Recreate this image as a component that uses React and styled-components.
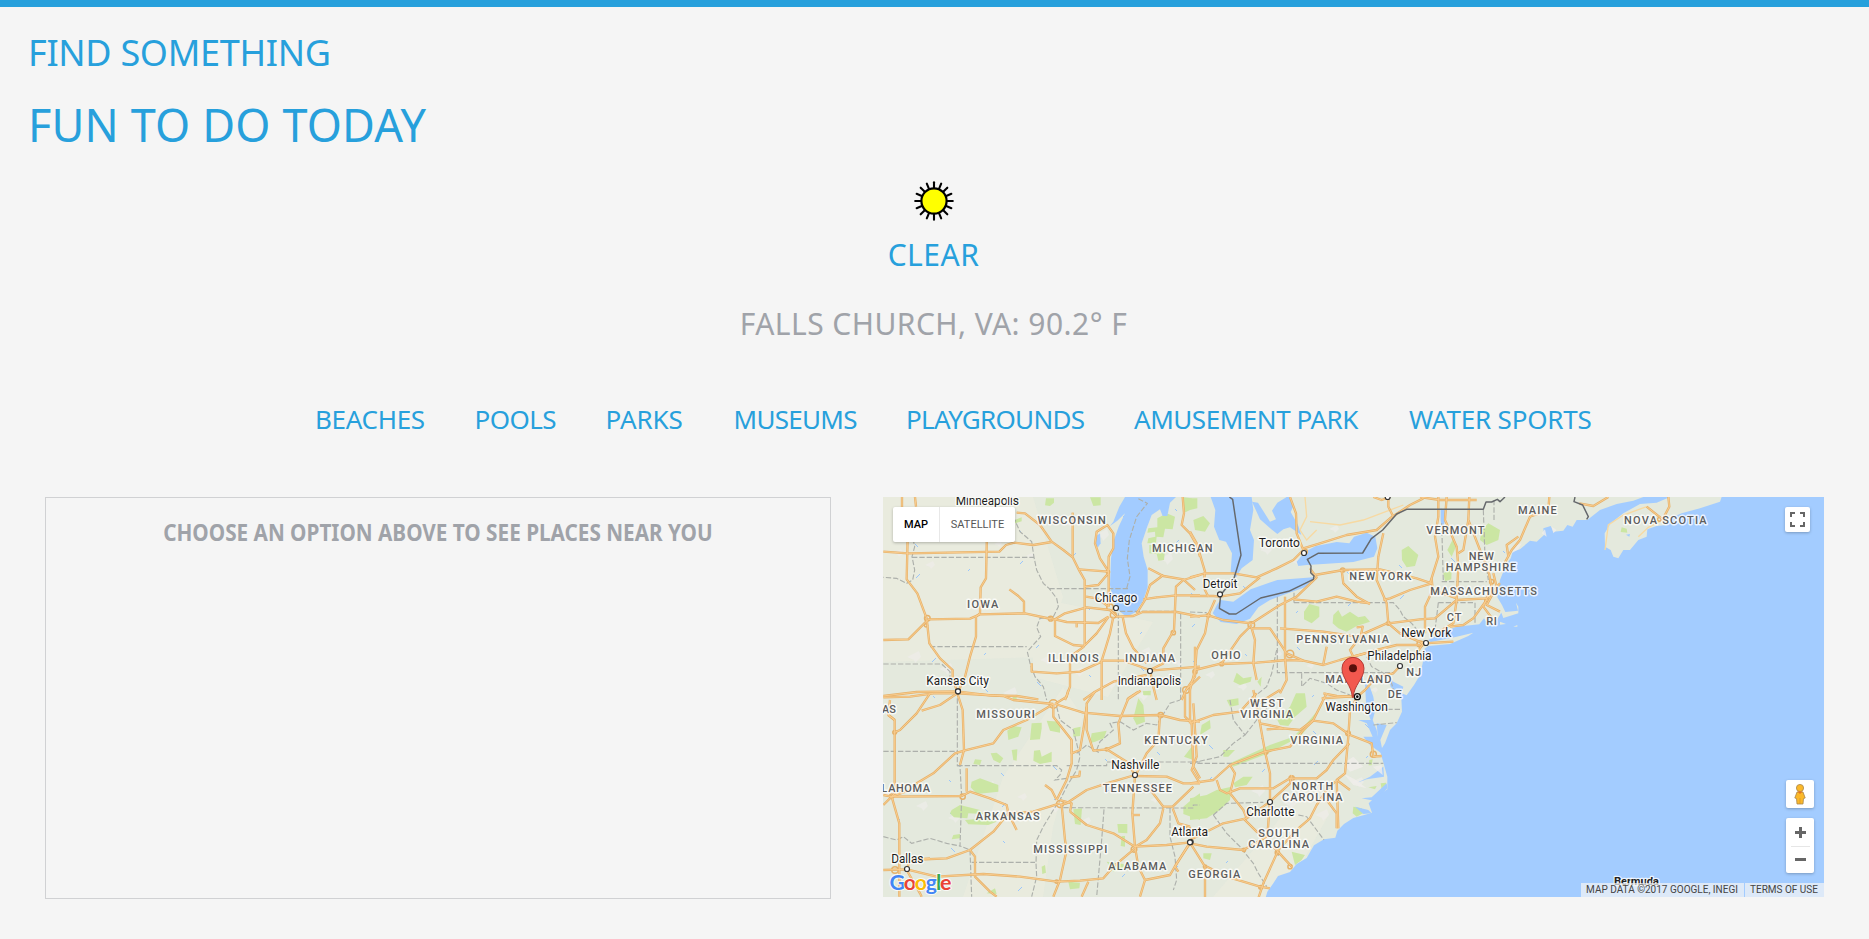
import React from "react";
import styled, { createGlobalStyle } from "styled-components";

const BLUE = "#27a0dc";
const GREY = "#a0a3a9";

const GlobalStyle = createGlobalStyle`
  * { box-sizing: border-box; }
  body { margin: 0; background: #f5f5f5; overflow: hidden; }
`;

const Page = styled.div`
  height: 939px;
  border-top: 7px solid ${BLUE};
  font-family: "Noto Sans", "Open Sans", sans-serif;
  color: ${GREY};
  text-transform: uppercase;
  white-space: nowrap;
`;

const Header = styled.header`
  padding: 21px 0 0 28px;
  color: ${BLUE};
`;

const Heading = styled.h1`
  margin: 0;
  font-weight: 400;
  font-size: ${(p) => p.$size}px;
  line-height: ${(p) => p.$line}px;
  letter-spacing: ${(p) => p.$spacing}px;
  padding-top: ${(p) => p.$top || 0}px;
`;

const Weather = styled.section`
  display: flex;
  flex-direction: column;
  align-items: center;
  padding: 26px 2px 0 0;
  font-size: 30px;
  line-height: 40px;
`;

const SunIcon = styled.svg`
  width: 40px;
  height: 40px;
`;

const Condition = styled.div`
  margin-top: 14px;
  letter-spacing: 0.5px;
  color: ${BLUE};
`;

const Place = styled.div`
  margin-top: 29px;
  letter-spacing: 0.45px;
`;

const Nav = styled.nav`
  display: flex;
  padding: 57px 0 0 315px;
  font-size: 26px;
  line-height: 36px;
  color: ${BLUE};
`;

const NavItem = styled.a`
  flex: none;
  width: ${(p) => p.$width}px;
  letter-spacing: ${(p) => p.$spacing}px;
`;

const Panels = styled.main`
  display: flex;
  align-items: flex-start;
  gap: 52px;
  padding: 60px 0 0 45px;
`;

const Places = styled.section`
  width: 786px;
  height: 402px;
  border: 1px solid #d0d1d3;
  padding-top: 17px;
  display: flex;
  justify-content: center;
`;

const Prompt = styled.div`
  height: 34px;
  font-size: 23px;
  font-weight: 700;
  line-height: 34px;
  transform: scaleX(0.901);
`;

const MapFrame = styled.section`
  position: relative;
  width: 941px;
  height: 400px;
  overflow: hidden;
  font-family: Roboto, sans-serif;
`;

const MapCanvas = styled.svg`
  display: block;
  width: 941px;
  height: 400px;
  text-transform: none;
`;

const Control = styled.div`
  position: absolute;
  top: ${(p) => p.$top}px;
  left: ${(p) => p.$left}px;
  width: ${(p) => p.$w}px;
  height: ${(p) => p.$h}px;
  display: flex;
  flex-direction: ${(p) => (p.$column ? "column" : "row")};
  align-items: center;
  justify-content: center;
  background: #fff;
  border-radius: 2px;
  box-shadow: 0 1px 3px rgba(0, 0, 0, 0.25);
`;

const MapType = styled.div`
  width: ${(p) => p.$w}px;
  height: 35px;
  line-height: 35px;
  text-align: center;
  font-size: 11px;
  font-weight: ${(p) => (p.$active ? 500 : 400)};
  color: ${(p) => (p.$active ? "#000" : "#565656")};
  border-left: ${(p) => (p.$active ? "0" : "1px solid #e8e8e8")};
`;

const ZoomButton = styled.div`
  width: 19px;
  height: 27px;
  display: flex;
  align-items: center;
  justify-content: center;
  & + & { border-top: 1px solid #e6e6e6; }
`;

const Attribution = styled.div`
  position: absolute;
  right: 0;
  bottom: 0;
  display: flex;
  gap: 1px;
  height: 14px;
  line-height: 14px;
  font-size: 10px;
  color: #444;
`;

const Credit = styled.span`
  width: ${(p) => p.$w}px;
  padding-right: 1px;
  text-align: center;
  background: rgba(245, 245, 245, 0.7);
`;

/* The map is drawn in sheets; every sheet has its own origin, at three units a pixel. */
const SHEETS = [
  {
    at: [-3, -7],
    water: [
      "M700 95L718 50L735 21H888L870 38L862 78L848 78L840 58L815 75L800 115L785 160L791 200L803 240V292L790 330L768 366L740 380L716 362L700 335L690 285L693 205L702 150L716 110L735 70L712 92L690 108Z",
      "M646 140L660 130L662 160L654 172L646 165Z",
    ],
    parks: ["M498 25H522V38L510 48L495 46Z", "M630 22H662V46L640 48Z", "M832 85L860 70L885 80L878 118L855 116L850 142L830 140L828 158L802 160L805 145L826 140L825 125L802 128L805 115L832 112Z", "M808 165H830L828 178L855 180L852 210L835 212L830 192L808 190Z", "M910 22L935 25L930 60L910 70Z", "M405 90L425 82V94L405 100Z", "M788 604L812 602V616H792Z", "M398 618L410 620V630H398Z"],
    borders: ["M98 80L96 130L104 170L96 200L104 240L98 270L80 280L50 265L10 262", "M96 202H462", "M400 80L420 125L455 155L462 202L470 240L490 280L508 296L530 325L535 350L520 380L480 385L470 412L482 440L455 470L442 485L450 520L465 560L490 590L500 630", "M508 296H750", "M150 470H440", "M10 522H185L210 545V570", "M715 370V630", "M720 364H890", "M902 372V630", "M740 295L750 260L742 205L748 150L770 80L802 40L770 24"],
    roads: ["M66 21V60L84 100L80 268L112 310L140 385L148 460L180 505L218 540V570L232 604", "M105 21L108 50", "M10 185L85 190L200 188L358 185L378 165L402 158L460 165L515 156", "M410 68L435 70L480 105L515 155L550 180L578 202L598 242L614 270V468", "M578 68V200", "M322 80L318 265L302 292L300 370L288 380V440L270 500L255 560L235 604", "M388 298L415 318L432 335V370", "M10 450L85 448L145 388L270 386L300 373L435 370L500 384L525 388L555 370L620 352L690 360L710 380L760 378L788 366L890 366L960 380", "M525 388L560 396L655 399L685 380", "M597 238L685 245", "M614 290L655 285L685 250L686 200L700 175V130L682 105L650 125L645 160L660 205L686 245L686 350", "M618 320L650 325L686 350", "M525 388V438L580 465L612 468L650 430L686 380", "M700 380L690 430L675 480L665 512V630", "M612 470L570 500V590L555 630", "M665 512H730L810 540L850 520V475L882 420L888 290L910 270L960 255", "M728 380L738 430L760 475L800 520", "M805 235L850 258L910 268L945 300", "M850 255L810 285L795 330L770 370", "M790 328L830 322L890 316H960", "M455 520V545L530 550L600 545L665 515", "M10 618L110 606L230 604L330 616L410 618L475 628", "M810 540L820 590L830 630", "M810 542L960 530", "M800 555L700 575L645 605L610 630", "M945 470V560L918 600L905 630", "M918 600L960 560", "M908 21L912 70L905 105L930 130L950 165L960 200", "M590 400V412", "M740 630L770 610L782 602"],
    hubs: [[142, 385, 12], [138, 406, 7], [512, 386, 10], [690, 352, 14], [700, 375, 13], [880, 428, 9], [918, 600, 14], [684, 246, 7]],
    cities: [[234, 604], [708, 354], [810, 543]],
    cityText: [["Minneapolis", 322, 45, 190], ["Chicago", 708, 335, 128], ["Kansas City", 233, 584, 188], ["Indianapolis", 808, 584, 190]],
    stateText: [["WISCONSIN", 575, 101, 205], ["IOWA", 308, 353, 94], ["ILLINOIS", 580, 515, 152], ["INDIANA", 810, 515, 150]],
  },
  {
    at: [307, -7],
    water: [
      "M62 21H185L190 60L180 120L192 150L188 210L155 235L138 262L122 245L126 190L108 155L88 150L72 110L76 60Z",
      "M186 35L204 38L240 95L258 88L246 62L262 38L290 21H298L312 45L302 66L324 105L334 135L300 112L280 118L262 132L244 118L210 88Z",
      "M320 215L345 185L378 168L440 156L478 160L492 140L530 128L556 140L562 175L552 200L490 216L400 222L350 225L325 228Z",
      "M92 330L130 335L182 298L262 270L370 262L350 290L298 308L240 330L205 352L180 386L140 402L92 396L68 370L82 342Z",
      "M752 55L766 62L768 85L756 120L752 90Z",
      "M525 580L540 592L550 620L556 660L548 690L560 720L574 790L540 765L520 740L548 740L530 700L505 690L542 690L530 655L500 640L528 640Z",
      "M498 880L540 860L580 830L582 860L530 868Z", "M515 925L545 922L590 880L592 895L560 932L540 930Z", "M495 950L535 960L545 970L520 972Z",
      "M1360 21L1330 32L1280 42L1230 60L1192 90L1160 90L1148 110L1132 105L1120 122L1090 125L1082 108L1060 115L1062 135L1040 155L1020 152L990 178L968 185L962 205L948 225L938 250L930 270L924 300L922 322L936 345L946 366L984 362L978 338L985 350V370L940 384L934 368L915 398L895 405L882 385L868 403L800 410L760 425L715 450L722 456L800 440L850 428L835 438L780 462L715 468L704 476L698 520L690 555L672 585L650 616L635 610L640 590L610 575L594 552L602 590L634 625L636 665L620 700L600 720L585 760L576 774L571 750L590 705L560 700L565 760L575 800L584 832L592 860V898L552 925L536 940L546 968L520 976L490 984L462 1002L442 1022L436 1043L402 1048L372 1066L350 1104L320 1122L300 1146L264 1158L250 1180L232 1205L222 1240H1940V21Z",
    ],
    land: ["M1440 21L1400 38L1350 42L1300 70L1262 100L1244 130L1245 170L1262 180L1270 200L1285 205L1300 180L1320 180L1345 150L1370 140L1372 118L1400 108L1430 105L1440 85L1475 70L1530 55L1590 35L1595 21Z"],
    parks: ["M342 365L358 342L388 350V380L365 400L342 388Z", "M430 375L445 360L456 380L480 365L505 382L525 378L540 395L500 408L470 425L445 415L428 400Z", "M635 180L655 168L668 180L685 195L675 228L650 232L636 210Z", "M875 120L895 100L930 120L925 150L890 165L870 150Z", "M772 180L790 145L800 165L785 200Z", "M760 250L785 238L784 268L765 274Z", "M10 90L40 78L60 100L45 125L15 120Z", "M0 25H22V55L0 60Z", "M130 575L140 548L160 565L185 560L182 575L150 585Z", "M202 575L215 560L212 590Z", "M262 690L300 650L318 610L345 610L350 650L315 680L295 708L270 705Z", "M350 700L380 665L400 640L372 690L330 740L230 792L130 830L120 820L240 765L310 740Z", "M110 630L145 625L146 645L120 650Z", "M35 705L60 690L62 715L30 735Z", "M490 950L515 955L522 968L500 980L488 970Z", "M538 810L548 808L545 826H536Z", "M572 880L588 878V898L575 900Z", "M535 892L560 888L555 898Z", "M305 1085L345 1095L335 1110L315 1125Z", "M0 925L50 915L80 900L125 890L120 930L90 960L50 985L0 990Z", "M130 880L160 860L188 860L170 885L135 892Z", "M100 780L135 780L115 800H100Z", "M40 1090L65 1090L60 1110L40 1105Z", "M1295 112L1310 116L1312 128L1292 126Z"],
    borders: ["M262 320V548H610", "M312 338H610L630 360L640 380L665 400L690 430", "M312 308V338", "M755 100L760 275", "M755 275H890", "M745 338H855V400", "M745 338L735 420L720 440", "M880 60L885 200L895 270", "M912 30V90", "M260 480L245 550L230 590L205 610L180 625", "M335 550V590L360 565L410 580L440 600L480 615", "M0 366L50 368", "M530 500L545 530L600 560L610 600", "M570 658H632", "M550 705L620 698", "M0 820L120 820H580", "M120 630L130 690L165 735L130 760L90 800L0 820", "M165 735L200 690L235 650", "M70 975L110 940L220 937", "M325 975L350 980L402 1050", "M70 975L110 1030L150 1070L190 1120L205 1150L230 1190"],
    frontier: ["M118 21L128 28L153 195L132 265L92 315L88 355L118 372H138L212 324L296 304L370 268L372 258L362 248L363 228L352 208L384 190L518 189L544 146L578 120L620 72L650 58H880L888 36H905L922 28L930 35L945 21", "M1155 21L1152 35L1178 45L1195 80L1190 88"],
    roads: ["M300 21L318 70L320 130L340 180L310 210L260 235L200 262L130 250H45L0 262", "M340 175L390 160L470 135L560 120L600 85L660 45L700 25", "M0 125L20 160L45 245L40 290L55 320", "M0 318L70 318L90 320L150 310L210 262", "M55 375L75 330", "M0 380L55 376L100 390L185 400L270 345L320 320L380 262L360 235", "M55 376L45 430L20 480L15 540L0 600", "M185 405L150 440L95 520L15 540", "M95 522L200 518L290 510L340 512L400 525L450 510L525 490L560 480L620 465L690 465L700 455", "M185 415L240 415L290 490L340 512", "M285 320V500L290 570L270 610", "M185 415L195 450L190 520L200 570", "M270 415L400 425L500 440L590 400", "M410 470L400 522", "M500 412L518 410L512 440L480 480L490 500L525 490", "M375 255L460 240L570 238L680 265L725 280", "M455 240L460 280L500 320L540 342", "M580 130L565 200L560 270L590 340L595 400L630 430L700 460", "M725 280L660 300L600 325L580 330", "M725 265L728 300L705 350V430", "M310 328L380 335L440 320L500 335L540 340", "M595 400L690 388L735 385L800 330L890 325L930 280", "M728 300L800 325", "M745 21V80L735 140L745 200L720 280", "M770 21L765 90L800 170L805 230L800 330L790 400L730 435", "M838 21L835 90L870 180L895 240L905 290L880 350L910 390", "M835 90L820 180L805 190", "M890 330L850 385L820 405L780 410", "M910 250L920 290L890 345L930 365", "M690 21L750 30H860", "M600 21L575 30L550 21", "M610 80L595 50V21", "M630 528L610 550L560 560L525 600L502 620", "M502 620L480 660L475 740L465 850L440 870L445 1015", "M645 510L680 490L700 460L790 455", "M395 625L500 618", "M0 700L70 675L150 665L200 610", "M400 610L440 618L500 620", "M410 610L370 690L330 720L280 715L230 718", "M190 600L210 700L225 785L240 850V930L232 1040", "M225 785L300 770L340 720L370 692L430 700L480 735", "M225 785L120 825L70 870L0 880", "M480 735L545 760L550 800L575 798", "M478 760L430 810L410 840L380 865H300L250 895L150 895L110 910L90 900L80 870", "M120 825L135 850L120 910L160 960L170 985L240 935", "M170 985L100 1000L0 1050", "M160 985L200 1025L230 1040", "M240 935L300 880L305 855", "M410 930L440 970V1015", "M440 870L480 900", "M410 900L380 945L360 985L320 1020L265 1080L220 1180L205 1225", "M0 1060L50 1070L160 1080L230 1040", "M0 1058L45 1130V1225", "M250 1070L305 1130", "M50 1130L110 1160L210 1190L240 1195", "M410 900L435 875", "M0 600V700", "M10 640L20 800L5 840L30 880", "M210 700L260 710L280 715", "M270 600L230 625L185 640", "M938 230L965 180L990 150L1020 80L1075 60L1078 21", "M955 200L950 165L985 140", "M1168 40L1210 48L1255 21", "M1370 50L1418 88L1438 50L1435 21"],
    minor: ["M345 21L350 80L330 120L350 150L380 120", "M360 95L450 105L520 90L640 45", "M1370 50L1300 75L1255 105L1245 180", "M1345 140L1375 112L1418 90"],
    hubs: [[184, 405, 14], [300, 492, 16], [458, 240, 9], [55, 376, 8], [95, 522, 8], [15, 545, 9], [595, 400, 8], [690, 462, 13], [550, 793, 13], [474, 730, 10], [228, 787, 8], [305, 865, 11], [345, 185, 10], [905, 275, 9], [890, 330, 8], [262, 1088, 9], [162, 1080, 7], [300, 1130, 9], [45, 1130, 7], [212, 1192, 8], [1408, 88, 8]],
    cities: [[342, 189], [90, 313], [708, 459], [630, 528], [240, 936], [593, 21], [2, 1056]],
    cityText: [["Toronto", 268, 170, 123], ["Detroit", 90, 294, 104], ["New York", 709, 440, 150], ["Philadelphia", 628, 509, 193], ["Washington", 500, 663, 188], ["Charlotte", 241, 978, 145]],
    stateText: [["MICHIGAN", -23, 185, 182], ["VERMONT", 796, 131, 174], ["NEW YORK", 571, 269, 186], ["NEW", 874, 209, 76], ["HAMPSHIRE", 873, 242, 212], ["MASSACHUSETTS", 881, 314, 320], ["CT", 792, 392, 44], ["RI", 905, 404, 32], ["PENNSYLVANIA", 458, 458, 278], ["OHIO", 108, 508, 88], ["MARYLAND", 505, 579, 198], ["NJ", 671, 558, 44], ["DE", 614, 623, 42], ["WEST", 230, 650, 100], ["VIRGINIA", 230, 683, 158], ["VIRGINIA", 380, 761, 158], ["NORTH", 368, 899, 124], ["CAROLINA", 367, 932, 182], ["SOUTH", 266, 1040, 122], ["CAROLINA", 266, 1073, 182], ["MAINE", 1042, 71, 116], ["NOVA SCOTIA", 1426, 101, 248]],
  },
  {
    at: [-3, 193],
    parks: ["M382 122L400 108L425 112L415 140L385 150Z", "M455 100L485 98V115L480 148L450 150Z", "M500 92L540 95V128L510 122Z", "M395 180L412 178L410 212L400 210Z", "M462 182L480 180L485 200L515 185V215L480 222L460 212Z", "M332 190L350 188L370 205L360 220L340 210Z", "M285 208L305 210L300 225L280 222Z", "M580 115L602 110L600 138L580 140Z", "M635 130L680 122L672 145L645 155L630 160Z", "M275 275L300 265L355 285L355 305L290 312L272 292Z", "M215 360L240 345L300 360L310 372L265 370L262 385L222 382L210 370Z", "M255 390L320 385L350 395L325 405L265 403Z", "M220 435L240 432V445L215 448Z", "M580 358L606 355L602 405L585 402Z", "M712 402H742V430L715 428Z", "M725 438H735V470L722 468Z", "M680 515L730 522L740 535L700 545Z", "M565 575L600 578L598 595L570 598Z", "M912 200L935 170L940 210Z", "M910 350L945 320L960 310V390L910 372Z", "M790 4L812 3L808 15H790Z", "M760 85L775 25L790 45L795 95L770 105Z", "M485 530L495 525L498 548L487 552Z", "M320 610L345 595L350 612Z"],
    borders: ["M232 25V227H240V230L245 320L240 468L270 480L275 620", "M10 184H232", "M232 227H530L545 240L540 255L525 270L560 265", "M10 440L50 450L70 440L95 460L150 445L200 460L240 468", "M275 517H465", "M530 50L540 90L580 120L590 160L600 200L590 240L560 290L540 330L520 360L490 410L470 450L468 520L470 560L455 620", "M590 190L620 165L660 190", "M650 180L660 155L700 120L690 100L720 95L760 120L800 100L830 105L870 40L900 30", "M560 227H680V216H960", "M550 353L870 354H940V345H960", "M672 358L665 450L650 620", "M870 354L870 440L885 500L890 570L880 600"],
    roads: ["M10 22L90 20L160 10L232 10L370 18L400 30L520 42", "M232 10L180 45L125 62", "M150 10L110 70L60 120L44 127", "M25 75L44 90V310L35 320L58 400V620", "M30 30L25 75L44 90", "M232 10L248 60L252 180L240 225", "M520 42L440 90L370 120L340 160L252 182L225 190L160 250L110 280L90 300L35 320L10 345", "M10 315L35 320L245 318L270 305L330 325L380 345L385 370L410 420", "M260 235V305", "M540 340L460 365L385 370L340 425L270 480L200 505L90 510", "M520 42V80L575 150V220L560 270L530 330", "M525 42L610 68L720 78L840 75L900 90L960 95", "M525 42L560 20L565 0", "M645 5L620 40V120L640 182L680 178", "M680 178L740 215L765 255", "M680 178L720 160L715 100L745 25L775 5", "M840 75L835 150L800 190L770 250", "M915 10V80L935 100L940 230L960 265", "M765 255L680 280L620 300L560 340L540 345", "M765 258L757 370L765 470", "M765 258L860 260L910 280L960 280", "M800 285L850 350H878L940 290", "M850 355L840 400L800 450L765 470", "M878 355L895 400L930 410", "M765 470L860 465L930 457", "M765 470L700 430L620 405L570 365", "M757 375L780 375", "M545 345L555 450L560 480L540 570L520 620", "M495 285L515 300L530 330", "M600 242L598 258L570 262", "M540 330L575 340L570 365", "M10 540L80 538L170 560L310 552L420 560L530 575L600 572L670 565L700 530L765 475", "M80 538L90 510L150 505", "M80 540L120 610L125 620", "M270 480L285 500V560L330 605L350 620", "M765 470L775 530L795 570L780 620", "M795 570L870 555L890 520L930 460", "M605 620L625 575", "M930 457L885 530L895 545", "M575 150V190L600 180L610 120L620 50"],
    hubs: [[520, 42, 18], [540, 342, 15], [248, 320, 11], [35, 318, 9], [842, 75, 11], [762, 478, 12], [45, 540, 14], [44, 127, 8], [680, 178, 7], [925, 415, 8], [530, 575, 7]],
    cities: [[765, 255], [930, 457], [81, 537], [234, 4]],
    cityText: [["Nashville", 766, 237, 144], ["Atlanta", 929, 438, 110], ["Dallas", 82, 519, 97]],
    stateText: [["KANSAS", -15, 68, 125], ["MISSOURI", 377, 83, 176], ["KENTUCKY", 888, 161, 190], ["OKLAHOMA", 54, 305, 192], ["TENNESSEE", 772, 305, 208], ["ARKANSAS", 383, 389, 192], ["MISSISSIPPI", 571, 488, 222], ["ALABAMA", 772, 539, 174], ["GEORGIA", 1003, 563, 156]],
  },
];

const Layer = ({ name, render }) =>
  SHEETS.map((s, i) => (
    <g key={i} transform={`translate(${s.at[0]} ${s.at[1]}) scale(0.33333)`}>
      {(s[name] || []).map(render)}
    </g>
  ));

/* Small lakes and pale hills scattered over the land. */
const LAKES = Array.from({ length: 95 }, (_, i) => [(i * 173 + 31) % 640, (i * 97 + 13) % 395, (i % 3) + 2]);
const HILLS = Array.from({ length: 48 }, (_, i) => [(i * 211 + 47) % 500, (i * 131 + 23) % 390, (i % 4) + 3]);

function Terrain() {
  return (
    <MapCanvas viewBox="0 0 941 400">
      <rect width="941" height="400" fill="#e4e9dd" />
      <path d="M0 0H150L180 100L160 160L0 165Z M150 100L270 125L225 200L150 180Z M80 400L120 280L180 190L200 220L170 330L160 400Z M330 400L390 330L430 280L450 310L400 400Z" fill="#eaebdf" opacity=".8" />
      {HILLS.map(([x, y, r], i) => (
        <path key={i} d={`M${x} ${y}l${r * 2} ${-r} l2 ${r} l${-r} ${r} l-1 ${-r / 2}z`} fill="#eeece9" opacity=".7" />
      ))}
      {LAKES.map(([x, y, r], i) => (
        <path key={i} d={`M${x} ${y}l${r} ${i % 2 ? r : -r}`} stroke="#91c2ff" strokeWidth=".9" />
      ))}
      <Layer name="parks" render={(d, i) => <path key={i} d={d} fill="#cbe6a3" />} />
      <Layer name="water" render={(d, i) => <path key={i} d={d} fill="#a3ccff" />} />
      <Layer name="land" render={(d, i) => <path key={i} d={d} fill="#e4e9dd" />} />
      <g transform="translate(307 -7) scale(.33333)">
        <path d="M1295 112L1310 116L1312 128L1292 126Z" fill="#cbe6a3" />
        <path d="M1308 134L1320 132L1318 140Z" fill="#a3ccff" />
        <path d="M970 410L982 405V410Z M930 395L948 402L930 404Z" fill="#e4e9dd" />
        <path d="M965 190L980 165L995 160L985 178Z M1055 130L1065 118L1070 140Z M1085 110L1100 120L1090 130Z M460 850L498 870L530 895L490 885Z M548 830L575 825L578 855Z M490 800L460 820L480 845L520 830Z" fill="#f0eeeb" opacity=".8" />
      </g>
      <Layer name="borders" render={(d, i) => <path key={i} d={d} fill="none" stroke="#adb0ab" strokeWidth="3.4" strokeDasharray="16 6" />} />
      <Layer name="minor" render={(d, i) => <path key={i} d={d} fill="none" stroke="#f7d9a2" strokeWidth="4" />} />
      <Layer name="roads" render={(d, i) => <path key={i} d={d} fill="none" stroke="#e6b26b" strokeWidth="7" strokeLinejoin="round" />} />
      <Layer name="hubs" render={([x, y, r], i) => <circle key={i} cx={x} cy={y} r={r * 0.7} fill="none" stroke="#e6b26b" strokeWidth="4.5" />} />
      <Layer name="roads" render={(d, i) => <path key={i} d={d} fill="none" stroke="#fbd093" strokeWidth="2.6" strokeLinejoin="round" />} />
      <Layer name="frontier" render={(d, i) => <path key={i} d={d} fill="none" stroke="#65686c" strokeWidth="4.4" strokeLinejoin="round" />} />
      <Layer name="cities" render={([x, y], i) => <circle key={i} cx={x} cy={y} r="7.5" fill="#fff" stroke="#333" strokeWidth="3.6" />} />
      <g fontFamily="Roboto, sans-serif" textAnchor="middle" paintOrder="stroke" stroke="#fff" strokeOpacity=".75" strokeLinejoin="round">
        <Layer name="stateText" render={([t, x, y, w], i) => (
          <text key={i} x={x} y={y} textLength={w} fontSize="33" fontWeight="500" fill="#5c5c5c" strokeWidth="9">{t}</text>
        )} />
        <Layer name="cityText" render={([t, x, y, w], i) => (
          <text key={i} x={x} y={y} textLength={w} fontSize="36" fill="#1c1c1c" strokeWidth="9">{t}</text>
        )} />
        <text x="753.5" y="388" textLength="45" fontSize="11.5" fontWeight="700" fill="#222" strokeWidth="2.5">Bermuda</text>
      </g>
      <g transform="translate(307 -7) scale(.33333)">
        <circle cx="502" cy="620" r="9" fill="#fff" stroke="#111" strokeWidth="4" />
        <circle cx="502" cy="620" r="4" fill="#111" />
        <path d="M487 622C485 584 456 568 456 535A33 33 0 0 1 522 535C522 568 491 584 490 622Z" fill="#f2584e" stroke="#b43a35" strokeWidth="3" />
        <circle cx="489" cy="535" r="12" fill="#590f0b" />
      </g>
      <text x="6.5" y="393" textLength="62" fontFamily="Lato, sans-serif" fontSize="21.5" fontWeight="700" paintOrder="stroke" stroke="#fff" strokeWidth="2" strokeOpacity=".8">
        <tspan fill="#4285f4">G</tspan><tspan fill="#ea4335">o</tspan><tspan fill="#fbbc05">o</tspan><tspan fill="#4285f4">g</tspan><tspan fill="#34a853">l</tspan><tspan fill="#ea4335">e</tspan>
      </text>
    </MapCanvas>
  );
}

function Sun() {
  return (
    <SunIcon viewBox="-20 -20 40 40">
      {Array.from({ length: 16 }, (_, i) => (
        <path key={i} d="M0 -12V-18.8" stroke="#000" strokeWidth="2.1" strokeLinecap="round" transform={`rotate(${i * 22.5})`} />
      ))}
      <circle r="12.6" fill="#ff0" stroke="#000" strokeWidth="2.2" />
    </SunIcon>
  );
}

const CATEGORIES = [
  ["Beaches", 159.5, -0.3],
  ["Pools", 131, -0.55],
  ["Parks", 128, -0.05],
  ["Museums", 172.5, -0.7],
  ["Playgrounds", 228, -0.7],
  ["Amusement Park", 275, -0.45],
  ["Water Sports", 190, -0.2],
];

export default function App() {
  return (
    <Page>
      <GlobalStyle />
      <Header>
        <Heading $size={36} $line={50} $spacing={-0.3}>Find something</Heading>
        <Heading as="h2" $size={45} $line={60} $spacing={0.17} $top={17}>Fun to do today</Heading>
      </Header>
      <Weather>
        <Sun />
        <Condition>Clear</Condition>
        <Place>Falls Church, VA: 90.2° F</Place>
      </Weather>
      <Nav>
        {CATEGORIES.map(([name, width, spacing]) => (
          <NavItem key={name} $width={width} $spacing={spacing}>{name}</NavItem>
        ))}
      </Nav>
      <Panels>
        <Places>
          <Prompt>Choose an option above to see places near you</Prompt>
        </Places>
        <MapFrame>
          <Terrain />
          <Control $top={10} $left={10} $w={122} $h={35}>
            <MapType $w={46} $active>Map</MapType>
            <MapType $w={76}>Satellite</MapType>
          </Control>
          <Control $top={10} $left={902} $w={25} $h={25}>
            <svg width="15" height="15" viewBox="0 0 15 15" fill="none" stroke="#666" strokeWidth="2">
              <path d="M1 5V1H5M10 1H14V5M14 10V14H10M5 14H1V10" />
            </svg>
          </Control>
          <Control $top={283} $left={903} $w={28} $h={28}>
            <svg width="14" height="22" viewBox="0 0 14 22">
              <path d="M4 9L10 9L12.2 15L10.5 15.5L10 21H4L3.5 15.5L1.8 15Z" fill="#fbb829" stroke="#a9874a" strokeWidth=".8" />
              <circle cx="7" cy="5" r="3.6" fill="#fbb829" stroke="#a9874a" strokeWidth=".8" />
              <path d="M4.5 8.5H9.5L7 11Z" fill="#e8731a" />
              <path d="M7 15V21" stroke="#d6942a" strokeWidth=".7" />
            </svg>
          </Control>
          <Control $top={321} $left={903} $w={28} $h={55} $column>
            <ZoomButton>
              <svg width="11" height="11" viewBox="0 0 11 11" stroke="#666" strokeWidth="3"><path d="M0 5.5H11M5.5 0V11" /></svg>
            </ZoomButton>
            <ZoomButton>
              <svg width="11" height="11" viewBox="0 0 11 11" stroke="#666" strokeWidth="3"><path d="M0 5.5H11" /></svg>
            </ZoomButton>
          </Control>
          <Attribution>
            <Credit $w={163}>Map data ©2017 Google, INEGI</Credit>
            <Credit $w={79}>Terms of Use</Credit>
          </Attribution>
        </MapFrame>
      </Panels>
    </Page>
  );
}
